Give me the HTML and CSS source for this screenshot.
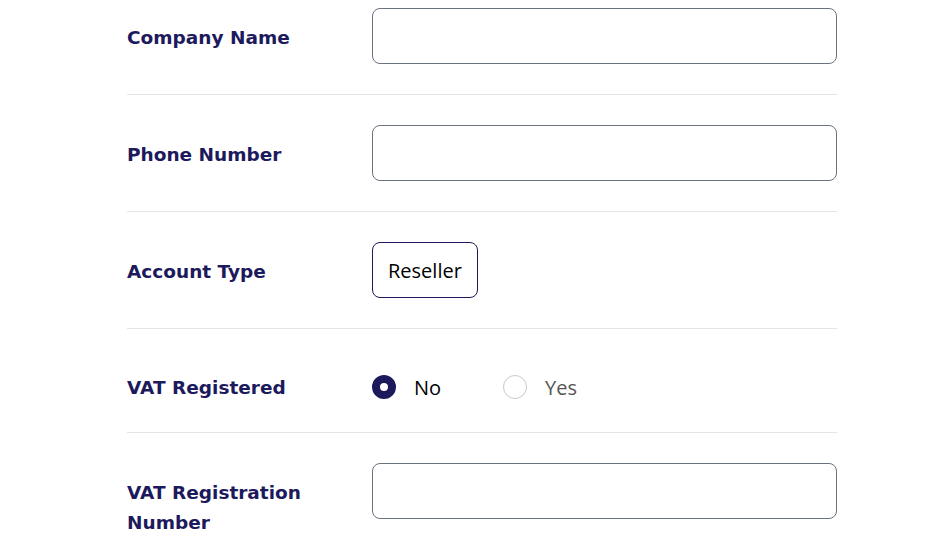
FILE: index.html
```html
<!DOCTYPE html>
<html lang="en">
<head>
    <meta charset="UTF-8">
    <meta name="viewport" content="width=device-width, initial-scale=1.0">
    <title>Account Details</title>
    <link rel="stylesheet" href="styles.css">
</head>
<body>

<div class="form">
    <div class="row">
        <label class="label" for="company">Company Name</label>
        <input class="field" type="text" id="company">
    </div>

    <div class="row">
        <label class="label" for="phone">Phone Number</label>
        <input class="field" type="text" id="phone">
    </div>

    <div class="row">
        <span class="label">Account Type</span>
        <div>
            <button class="pill">Reseller</button>
        </div>
    </div>

    <div class="row row-radio">
        <span class="label">VAT Registered</span>
        <div class="radios">
            <label class="radio">
                <span class="dot checked"></span>
                <span class="radio-text">No</span>
            </label>
            <label class="radio">
                <span class="dot"></span>
                <span class="radio-text muted">Yes</span>
            </label>
        </div>
    </div>

    <div class="row">
        <label class="label" for="vat">VAT Registration Number</label>
        <input class="field" type="text" id="vat">
    </div>
</div>

</body>
</html>
```

FILE: styles.css
```css
body {
    margin: 0;
    background-color: #fff;
    font-family: "Open Sans", Arial, sans-serif;
    color: #000;
}

.form {
    width: 710px;
    margin: -22px 0 0 127px;
}

.row {
    display: grid;
    grid-template-columns: 200px 1fr;
    column-gap: 45px;
    align-items: start;
    padding: 30px 0;
    border-bottom: 1px solid #e6e6e6;
}

.label {
    padding-top: 15px;
    font-family: "DejaVu Sans", Lato, sans-serif;
    font-size: 18.5px;
    font-weight: 700;
    line-height: 30px;
    color: #1c1a5c;
}

.row-radio .label {
    padding-top: 14px;
    line-height: 29px;
}

.field {
    height: 56px;
    width: 100%;
    box-sizing: border-box;
    border: 1px solid #6b7280;
    border-radius: 8px;
    outline: none;
    padding: 0 14px;
    font-size: 18px;
}

.pill {
    height: 56px;
    padding: 0 15px;
    background: #fff;
    border: 1px solid #1c1a5c;
    border-radius: 8px;
    font-family: "Open Sans", Arial, sans-serif;
    font-size: 20px;
    color: #000;
}

.radios {
    display: flex;
    align-items: center;
    height: 30px;
    padding-top: 13px;
    gap: 62px;
}

.radio {
    display: flex;
    align-items: center;
    gap: 18px;
}

.dot {
    width: 24px;
    height: 24px;
    box-sizing: border-box;
    border: 1px solid #c8c8c8;
    border-radius: 50%;
    background: #fff;
}

.dot.checked {
    border: 8px solid #1c1a5c;
}

.radio-text {
    font-size: 20px;
}

.muted {
    color: #555;
}
```
